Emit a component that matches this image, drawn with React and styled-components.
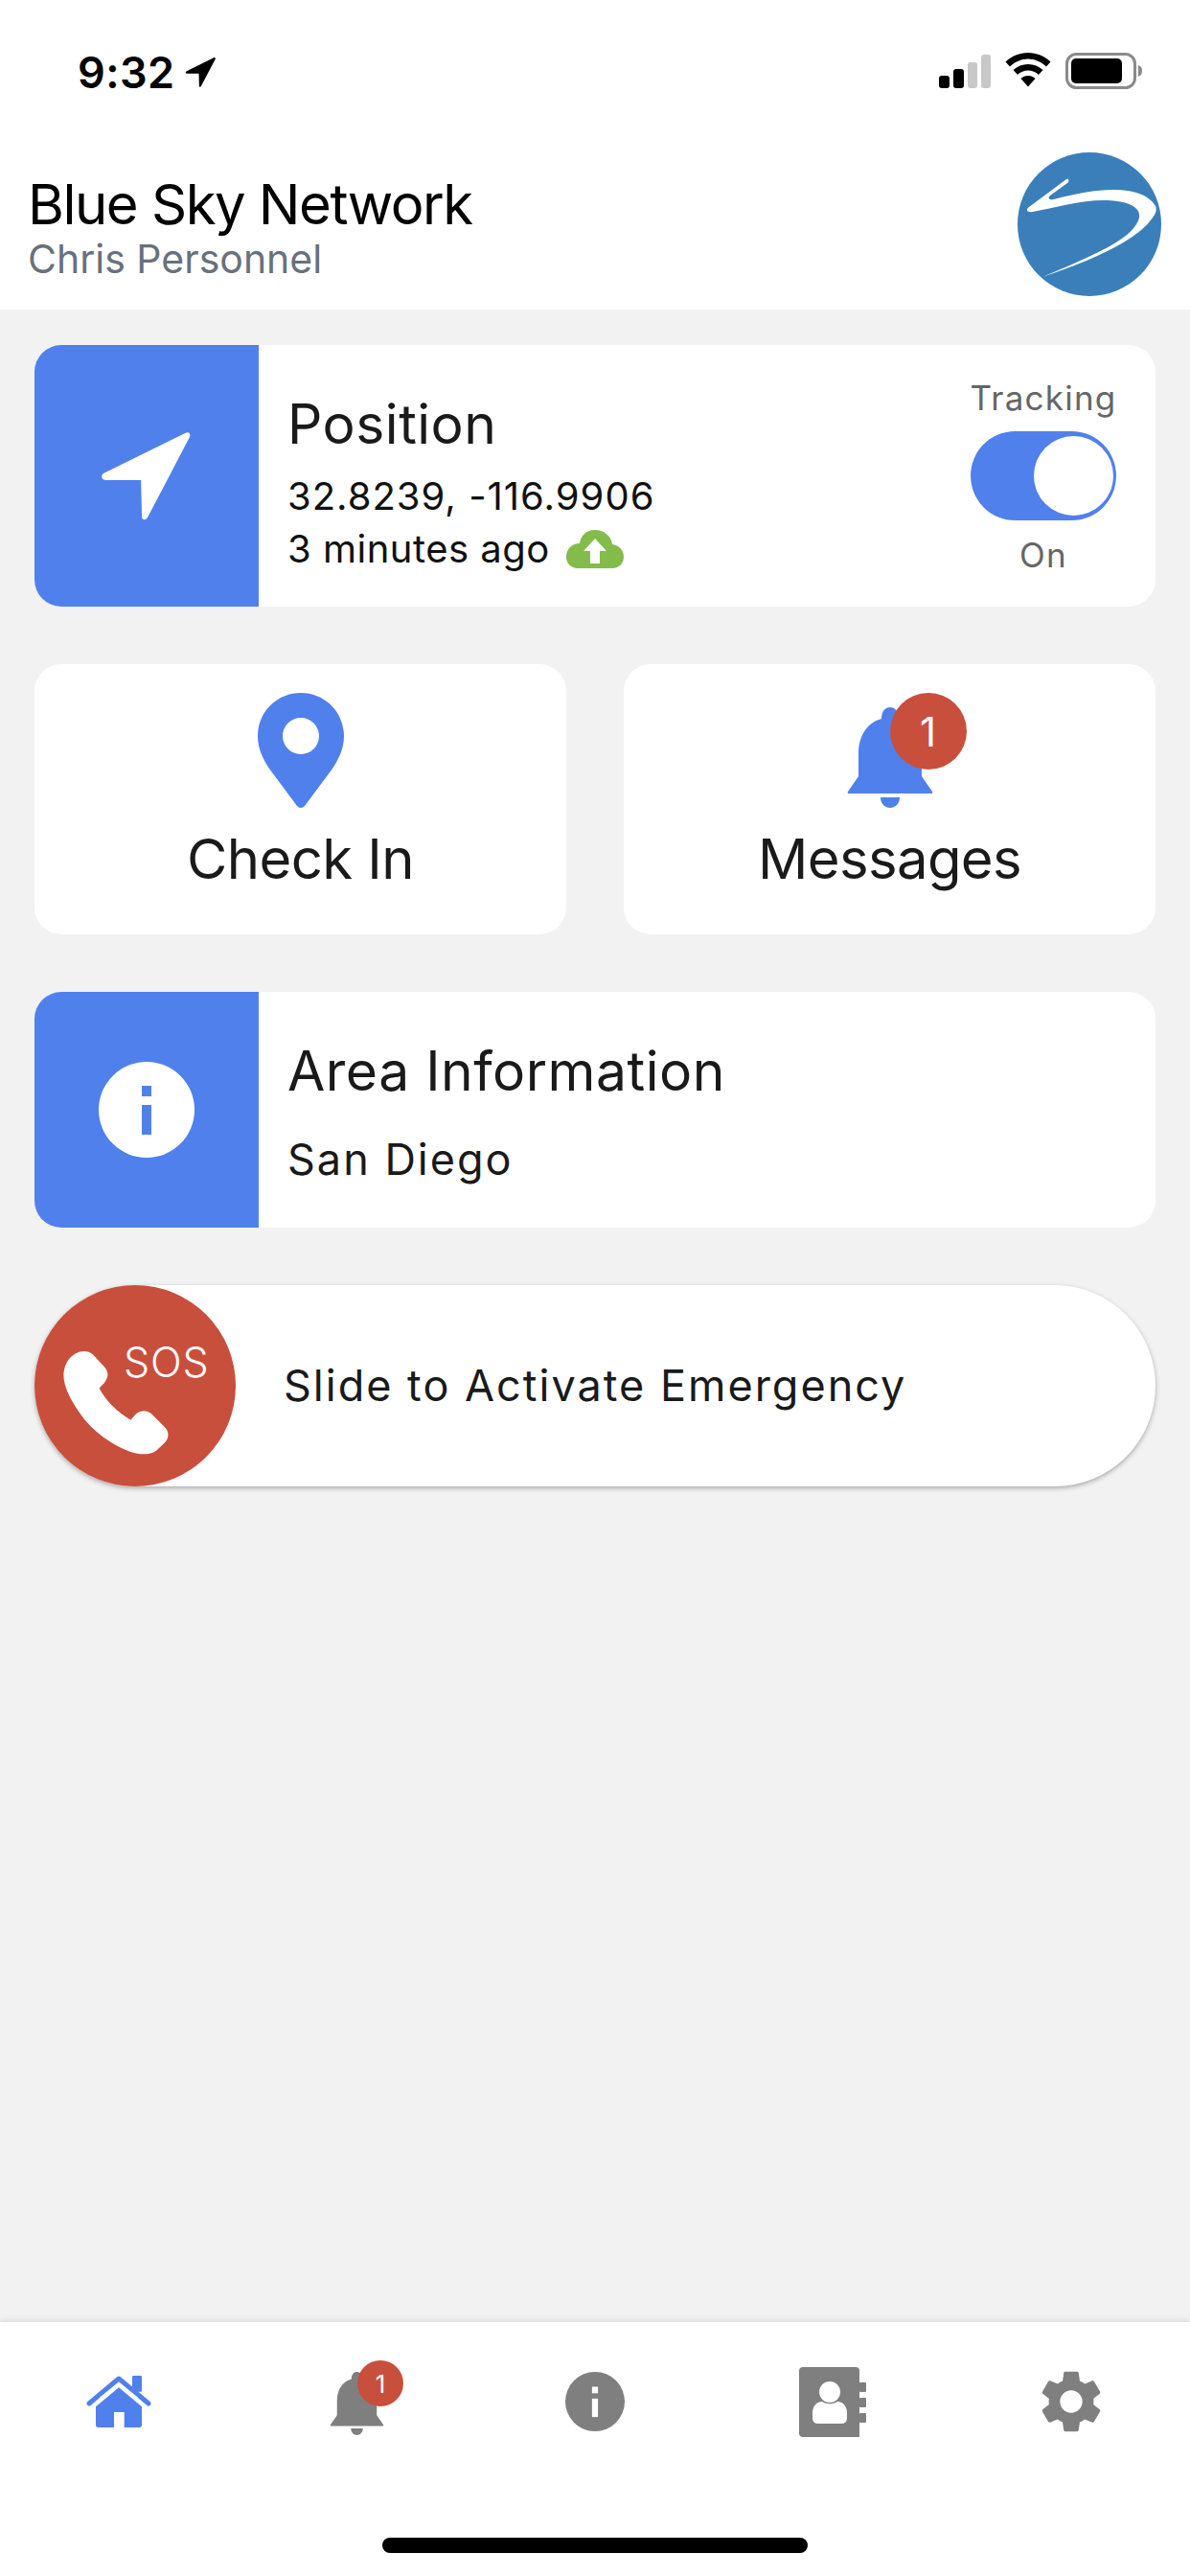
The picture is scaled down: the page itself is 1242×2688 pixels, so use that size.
import React from 'react';
import styled, { createGlobalStyle } from 'styled-components';
import { MdSettings } from 'react-icons/md';

const BLUE = '#5080ec';
const RED = '#c94f3d';
const GRAY = '#7f7f7f';

const GlobalStyle = createGlobalStyle`
  html, body {
    margin: 0;
    padding: 0;
    background: #f2f2f2;
  }
  * {
    box-sizing: border-box;
  }
`;

const Screen = styled.div`
  display: flex;
  flex-direction: column;
  width: 1242px;
  height: 2688px;
  overflow: hidden;
  background: #f2f2f2;
  color: #1a1a1a;
  font-family: Inter, 'Liberation Sans', sans-serif;
`;

const StatusBar = styled.div`
  display: flex;
  justify-content: space-between;
  align-items: flex-start;
  height: 144px;
  padding: 55px 50px 0 81px;
  background: #fff;
`;

const StatusLeft = styled.div`
  display: flex;
  align-items: flex-start;
  gap: 11px;
`;

const ArrowSlot = styled.div`
  display: flex;
  margin-top: 4px;
`;

const Clock = styled.span`
  font-size: 45px;
  font-weight: 600;
  line-height: 42px;
  letter-spacing: 0.4px;
  color: #000;
`;

const StatusRight = styled.div`
  display: flex;
  align-items: flex-start;
  gap: 15px;
`;

const Header = styled.header`
  display: flex;
  justify-content: space-between;
  align-items: flex-start;
  height: 179px;
  padding: 15px 30px 0 29px;
  background: #fff;
`;

const HeaderText = styled.div`
  display: flex;
  flex-direction: column;
  padding-top: 21px;
`;

const AppTitle = styled.div`
  font-size: 58px;
  line-height: 66px;
  letter-spacing: -1.5px;
  color: #000;
`;

const UserName = styled.div`
  font-size: 41px;
  line-height: 48px;
  color: #68717c;
`;

const Main = styled.main`
  flex: 1;
  display: flex;
  flex-direction: column;
  gap: 60px;
  padding: 37px 36px 0;
`;

const Card = styled.section`
  display: flex;
  height: ${props => props.$height}px;
  border-radius: 28px;
  overflow: hidden;
  background: #fff;
`;

const IconPanel = styled.div`
  flex: none;
  display: flex;
  justify-content: center;
  align-items: center;
  width: 234px;
  background: ${BLUE};
`;

const CardBody = styled.div`
  flex: 1;
  display: flex;
  flex-direction: column;
  padding: ${props => props.$top}px 0 0 30px;
`;

const CardTitle = styled.div`
  font-size: 57px;
  line-height: 66px;
  letter-spacing: 0.5px;
  color: #1a1a1a;
`;

const PositionText = styled.div`
  display: flex;
  align-items: center;
  gap: 17px;
  font-size: 40px;
  line-height: 55px;
  letter-spacing: ${props => props.$spacing}px;
  color: #111;
`;

const CoordsGap = styled.div`
  height: 14px;
`;

const TrackingColumn = styled.div`
  flex: none;
  display: flex;
  flex-direction: column;
  align-items: center;
  width: 152px;
  margin: 33px 41px 0 0;
`;

const TrackingLabel = styled.div`
  font-size: 35px;
  line-height: 44px;
  letter-spacing: 1.2px;
  white-space: nowrap;
  color: #666;
`;

const Toggle = styled.div`
  display: flex;
  justify-content: flex-end;
  align-items: center;
  width: 152px;
  height: 93px;
  margin: 13px 0 14px;
  padding-right: 3px;
  border-radius: 47px;
  background: ${BLUE};
`;

const ToggleKnob = styled.div`
  width: 83px;
  height: 83px;
  border-radius: 50%;
  background: #fff;
`;

const TileRow = styled.div`
  display: grid;
  grid-template-columns: 555px 555px;
  justify-content: space-between;
  height: 282px;
`;

const Tile = styled.section`
  display: flex;
  flex-direction: column;
  align-items: center;
  padding-top: 30px;
  border-radius: 28px;
  background: #fff;
`;

const TileIcon = styled.div`
  position: relative;
  display: flex;
  justify-content: center;
  align-items: flex-end;
  height: 120px;
  width: 90px;
`;

const TileLabel = styled.div`
  margin-top: 18px;
  font-size: 58px;
  line-height: 70px;
  letter-spacing: -0.6px;
  color: #1a1a1a;
`;

const Badge = styled.div`
  position: absolute;
  top: ${props => props.$top}px;
  left: ${props => props.$left}px;
  display: flex;
  justify-content: center;
  align-items: center;
  width: ${props => props.$size}px;
  height: ${props => props.$size}px;
  border-radius: 50%;
  background: ${RED};
  color: #fff;
  font-size: ${props => props.$font}px;
`;

const AreaName = styled.div`
  margin-top: 29px;
  font-size: 45px;
  line-height: 60px;
  letter-spacing: 2px;
  color: #1a1a1a;
`;

const Slider = styled.div`
  display: flex;
  align-items: center;
  height: 210px;
  border-radius: 105px;
  background: #fff;
  box-shadow: 0 2px 5px rgba(0, 0, 0, 0.3);
`;

const SosButton = styled.div`
  position: relative;
  flex: none;
  width: 210px;
  height: 210px;
  border-radius: 50%;
  background: ${RED};
`;

const SosLabel = styled.span`
  position: absolute;
  top: 55px;
  left: 93px;
  font-size: 43px;
  font-weight: 300;
  line-height: 50px;
  letter-spacing: 0.8px;
  color: #fff;
`;

const PhoneIcon = styled.svg`
  position: absolute;
  top: 67px;
  left: 29px;
  width: 113px;
  height: 113px;
`;

const SliderText = styled.div`
  margin: -2px 0 0 50px;
  font-size: 45px;
  letter-spacing: 2px;
  color: #1a1a1a;
`;

const TabBar = styled.nav`
  flex: none;
  height: 265px;
  padding-bottom: 24px;
  display: flex;
  flex-direction: column;
  justify-content: space-between;
  background: #fff;
  box-shadow: 0 -1px 6px rgba(0, 0, 0, 0.12);
`;

const TabRow = styled.div`
  display: grid;
  grid-template-columns: repeat(5, 1fr);
  height: 166px;
`;

const Tab = styled.div`
  display: flex;
  justify-content: center;
  align-items: center;
`;

const TabBell = styled.div`
  position: relative;
  display: flex;
  width: 57px;
  height: 66px;
  margin-top: 4px;
`;

const HomeIndicator = styled.div`
  align-self: center;
  width: 444px;
  height: 16px;
  border-radius: 8px;
  background: #000;
`;

const NavArrow = ({ size, color }) => (
  <svg width={size} height={size} viewBox="-2 -2 100 100">
    <path
      fill={color}
      d="M89 2 C93 0 95 2 94 6 L49 92 C47 95 44 95 43 92 L42 52 L4 52 C0 52 -1 47 2 45 Z"
    />
  </svg>
);

const SignalIcon = () => (
  <svg width="54" height="37" viewBox="0 0 54 37" style={{ marginTop: 2 }}>
    <rect x="0" y="22" width="11" height="13" rx="3" fill="#000" />
    <rect x="15" y="15" width="11" height="20" rx="3" fill="#000" />
    <rect x="30" y="8" width="10" height="27" rx="3" fill="#c8c8c8" />
    <rect x="44" y="0" width="10" height="35" rx="3" fill="#c8c8c8" />
  </svg>
);

const WifiIcon = () => (
  <svg width="48" height="36" viewBox="0 0 48 36">
    <path d="M24 0 C15 0 7 3.5 0.5 9.5 L5 14.5 C10 9.5 17 6.5 24 6.5 C31 6.5 38 9.5 43 14.5 L47.5 9.5 C41 3.5 33 0 24 0Z" />
    <path d="M24 12 C18 12 13 14 8.5 18 L13 23 C16 20 20 18.5 24 18.5 C28 18.5 32 20 35 23 L39.5 18 C35 14 30 12 24 12Z" />
    <path d="M24 24 C21 24 18.5 25 16.5 27 L24 35.5 L31.5 27 C29.5 25 27 24 24 24Z" />
  </svg>
);

const BatteryIcon = () => (
  <svg width="80" height="38" viewBox="0 0 80 38">
    <rect x="1.5" y="1.5" width="71" height="35" rx="10" fill="none" stroke="#8a8a8a" strokeWidth="3" />
    <rect x="6" y="6" width="53" height="26" rx="5" fill="#000" />
    <path d="M76 13 C79 14 80 16 80 19 C80 22 79 24 76 25 Z" fill="#8a8a8a" />
  </svg>
);

const Logo = () => (
  <svg width="150" height="150" viewBox="0 0 150 150">
    <circle cx="75" cy="75" r="75" fill="#3b7fba" />
    <path
      fill="#fff"
      d="M51 28 C54 27 54 30 52 32 L34 45 C31 48 33 50 38 49 C60 43 82 39 100 39 C120 39 137 44 144 56 C146 60 144 65 138 72 C122 92 80 112 26 130 C80 107 122 90 127 68 C129 55 110 50 90 50 C65 50 38 58 16 62 C10 63 8 60 12 57 Z"
    />
  </svg>
);

const CloudIcon = () => (
  <svg width="60" height="40" viewBox="0 0 60 40">
    <path
      fill="#84bc4b"
      d="M30 0 C21 0 15 6 14 14 C6 14 0 20 0 28 C0 35 5 40 12 40 H48 C55 40 60 35 60 28 C60 21 55 16 48 15 C47 6 39 0 30 0Z"
    />
    <path fill="#fff" d="M30 9 L42 22 H35 V35 H25 V22 H18Z" />
  </svg>
);

const PinIcon = () => (
  <svg width="90" height="120" viewBox="0 0 90 120">
    <path
      fill={BLUE}
      fillRule="evenodd"
      d="M45 0 C20 0 0 20 0 45 C0 58 5 68 12 79 L41 118 Q45 122 49 118 L78 79 C85 68 90 58 90 45 C90 20 70 0 45 0Z M45 26 a19 19 0 1 1 0 38 a19 19 0 1 1 0 -38Z"
    />
  </svg>
);

const BellIcon = ({ width, height, color }) => (
  <svg width={width} height={height} viewBox="0 0 90 105">
    <path
      fill={color}
      d="M45 0 C40 0 36 4 36 12 C21 16 12 30 12 48 V72 L1 88 Q0 90 2 90 H88 Q90 90 89 88 L78 72 V48 C78 30 69 16 54 12 C54 4 50 0 45 0Z M35 94 H55 C55 101 50 105 45 105 C40 105 35 101 35 94Z"
    />
  </svg>
);

const InfoIcon = ({ size, color, mark }) => (
  <svg width={size} height={size} viewBox="0 0 100 100">
    <circle cx="50" cy="50" r="50" fill={color} />
    <rect x="45" y="25" width="10" height="11" fill={mark} />
    <rect x="45" y="45" width="10" height="31" fill={mark} />
  </svg>
);

const HomeIcon = () => (
  <svg width="68" height="56" viewBox="88 115 204 168">
    <rect x="232" y="118" width="30" height="50" rx="3" fill={BLUE} />
    <path d="M97 205 L190 127 L283 205" fill="none" stroke={BLUE} strokeWidth="15" strokeLinecap="round" strokeLinejoin="round" />
    <path fill="#fff" d="M190 138 L250 186 V200 H130 V186 Z" />
    <path fill={BLUE} d="M190 155 L262 215 V272 Q262 280 254 280 H207 V232 H175 V280 H126 Q118 280 118 272 V215 Z" />
  </svg>
);

const ContactsIcon = () => (
  <svg width="70" height="73" viewBox="0 0 70 73">
    <path fill={GRAY} d="M4 0 H59 Q63 0 63 4 V73 H4 Q0 73 0 69 V4 Q0 0 4 0Z" />
    <rect x="63" y="16" width="7" height="10" rx="1" fill={GRAY} />
    <rect x="63" y="32" width="7" height="10" rx="1" fill={GRAY} />
    <rect x="63" y="48" width="7" height="10" rx="1" fill={GRAY} />
    <circle cx="32" cy="26" r="11" fill="#fff" />
    <path fill="#fff" d="M14 48 C14 41 18 36 24 36 C28 39 36 39 40 36 C46 36 50 41 50 48 V53 Q50 59 44 59 H20 Q14 59 14 53Z" />
  </svg>
);

export default function App() {
  return (
    <>
      <GlobalStyle />
      <Screen>
        <StatusBar>
          <StatusLeft>
            <Clock>9:32</Clock>
            <ArrowSlot>
              <NavArrow size={33} color="#000" />
            </ArrowSlot>
          </StatusLeft>
          <StatusRight>
            <SignalIcon />
            <WifiIcon />
            <BatteryIcon />
          </StatusRight>
        </StatusBar>
        <Header>
          <HeaderText>
            <AppTitle>Blue Sky Network</AppTitle>
            <UserName>Chris Personnel</UserName>
          </HeaderText>
          <Logo />
        </Header>
        <Main>
          <Card $height={273}>
            <IconPanel>
              <NavArrow size={98} color="#fff" />
            </IconPanel>
            <CardBody $top={50}>
              <CardTitle>Position</CardTitle>
              <CoordsGap />
              <PositionText $spacing={1}>32.8239, -116.9906</PositionText>
              <PositionText $spacing={0.5}>
                3 minutes ago
                <CloudIcon />
              </PositionText>
            </CardBody>
            <TrackingColumn>
              <TrackingLabel>Tracking</TrackingLabel>
              <Toggle>
                <ToggleKnob />
              </Toggle>
              <TrackingLabel>On</TrackingLabel>
            </TrackingColumn>
          </Card>
          <TileRow>
            <Tile>
              <TileIcon>
                <PinIcon />
              </TileIcon>
              <TileLabel>Check In</TileLabel>
            </Tile>
            <Tile>
              <TileIcon>
                <BellIcon width={90} height={105} color={BLUE} />
                <Badge $top={0} $left={45} $size={80} $font={42}>1</Badge>
              </TileIcon>
              <TileLabel>Messages</TileLabel>
            </Tile>
          </TileRow>
          <Card $height={246}>
            <IconPanel>
              <InfoIcon size={100} color="#fff" mark={BLUE} />
            </IconPanel>
            <CardBody $top={50}>
              <CardTitle>Area Information</CardTitle>
              <AreaName>San Diego</AreaName>
            </CardBody>
          </Card>
          <Slider>
            <SosButton>
              <PhoneIcon viewBox="130 230 340 340">
                <path
                  fill="#fff"
                  d="M150 262 C170 235 205 228 225 245 L262 285 C280 305 272 322 262 335 L246 352 C270 395 300 425 345 452 L362 432 C378 420 395 420 410 432 L450 472 C468 490 465 510 450 525 L425 548 C405 562 375 562 345 552 C290 532 225 490 185 430 C150 380 130 335 135 300 C137 285 142 272 150 262Z"
                />
              </PhoneIcon>
              <SosLabel>SOS</SosLabel>
            </SosButton>
            <SliderText>Slide to Activate Emergency</SliderText>
          </Slider>
        </Main>
        <TabBar>
          <TabRow>
            <Tab>
              <HomeIcon />
            </Tab>
            <Tab>
              <TabBell>
                <BellIcon width={57} height={66} color={GRAY} />
                <Badge $top={-12} $left={29} $size={48} $font={26}>1</Badge>
              </TabBell>
            </Tab>
            <Tab>
              <InfoIcon size={62} color={GRAY} mark="#fff" />
            </Tab>
            <Tab>
              <ContactsIcon />
            </Tab>
            <Tab>
              <MdSettings size={78} color={GRAY} />
            </Tab>
          </TabRow>
          <HomeIndicator />
        </TabBar>
      </Screen>
    </>
  );
}
